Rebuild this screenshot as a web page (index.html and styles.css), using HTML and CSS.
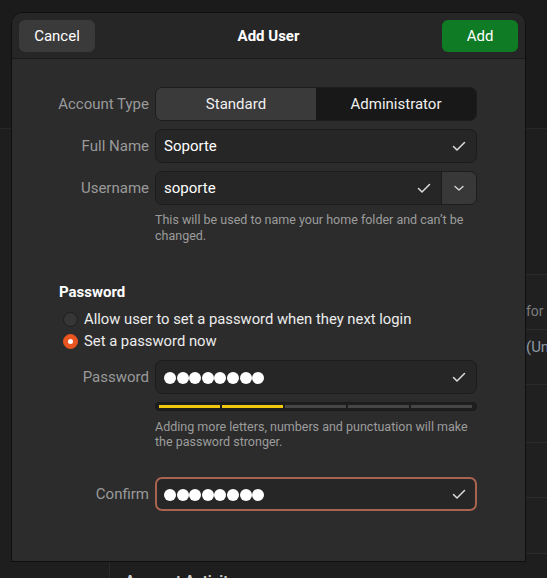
FILE: index.html
```html
<!DOCTYPE html>
<html lang="en">
<head>
<meta charset="utf-8">
<title>Add User</title>
<link rel="stylesheet" href="styles.css">
</head>
<body>
<div class="backdrop">
  <div class="bd-top"></div>
  <div class="bd-content">
    <div class="bd-side"></div>
    <div class="bd-main">
      <div class="bd-list">
        <div class="bd-row bd-row-a"><span class="bd-sub">for all</span></div>
        <div class="bd-row bd-row-b"><span class="bd-title">(Un</span></div>
        <div class="bd-row bd-row-c"></div>
        <div class="bd-row bd-row-d"></div>
        <div class="bd-row bd-row-e"></div>
      </div>
      <div class="bd-heading">Account Activity</div>
    </div>
  </div>
</div>

<div class="dialog">
  <div class="header">
    <button class="btn btn-cancel">Cancel</button>
    <div class="title">Add User</div>
    <button class="btn btn-add">Add</button>
  </div>

  <div class="content">
    <div class="form">
      <div class="label">Account Type</div>
      <div class="segmented">
        <div class="seg seg-on">Standard</div>
        <div class="seg seg-off">Administrator</div>
      </div>

      <div class="label">Full Name</div>
      <div class="entry">
        <span class="entry-text">Soporte</span>
        <svg class="check" viewBox="0 0 16 16" width="16" height="16"><path d="M2.5 8.5 L6 12 L13.5 4.5" fill="none" stroke="#dcdcdc" stroke-width="1.5" stroke-linecap="round" stroke-linejoin="round"/></svg>
      </div>

      <div class="label">Username</div>
      <div class="combo">
        <div class="combo-entry">
          <span class="entry-text">soporte</span>
          <svg class="check" viewBox="0 0 16 16" width="16" height="16"><path d="M2.5 8.5 L6 12 L13.5 4.5" fill="none" stroke="#dcdcdc" stroke-width="1.5" stroke-linecap="round" stroke-linejoin="round"/></svg>
        </div>
        <div class="combo-btn">
          <svg viewBox="0 0 16 16" width="16" height="16"><path d="M4 6.5 L8 10 L12 6.5" fill="none" stroke="#dcdcdc" stroke-width="1.3" stroke-linecap="round" stroke-linejoin="round"/></svg>
        </div>
      </div>

      <div class="helper helper-user">This will be used to name your home folder and can’t be changed.</div>
    </div>

    <div class="pw-title">Password</div>
    <div class="radios">
      <div class="radio-row"><span class="radio"></span><span class="radio-text">Allow user to set a password when they next login</span></div>
      <div class="radio-row"><span class="radio radio-on"></span><span class="radio-text">Set a password now</span></div>
    </div>

    <div class="form form-pw">
      <div class="label">Password</div>
      <div class="entry">
        <span class="dots"><i></i><i></i><i></i><i></i><i></i><i></i><i></i><i></i></span>
        <svg class="check" viewBox="0 0 16 16" width="16" height="16"><path d="M2.5 8.5 L6 12 L13.5 4.5" fill="none" stroke="#dcdcdc" stroke-width="1.5" stroke-linecap="round" stroke-linejoin="round"/></svg>
      </div>

      <div class="strength">
        <span class="bar bar-on"></span><span class="bar bar-on"></span><span class="bar"></span><span class="bar"></span><span class="bar"></span>
      </div>

      <div class="helper helper-pw">Adding more letters, numbers and punctuation will make the password stronger.</div>

      <div class="label label-confirm">Confirm</div>
      <div class="entry entry-focus">
        <span class="dots"><i></i><i></i><i></i><i></i><i></i><i></i><i></i><i></i></span>
        <svg class="check" viewBox="0 0 16 16" width="16" height="16"><path d="M2.5 8.5 L6 12 L13.5 4.5" fill="none" stroke="#dcdcdc" stroke-width="1.5" stroke-linecap="round" stroke-linejoin="round"/></svg>
      </div>
    </div>
  </div>
</div>
</body>
</html>
```

FILE: styles.css
```css
* { box-sizing: border-box; }

body {
  margin: 0;
  width: 547px;
  height: 578px;
  overflow: hidden;
  position: relative;
  background: #1c1c1c;
  font-family: Roboto, "Noto Sans", sans-serif;
  font-size: 15px;
}

/* ---------- backdrop window ---------- */
.backdrop {
  height: 578px;
  display: flex;
  flex-direction: column;
}
.bd-top {
  height: 129px;
  flex: none;
  background: #1b1b1b;
  border-bottom: 1px solid #272727;
}
.bd-content {
  flex: 1;
  display: flex;
}
.bd-side {
  width: 110px;
  flex: none;
  background: #1e1e1e;
  border-right: 1px solid #2a2a2a;
}
.bd-main {
  flex: 1;
  background: #1e1e1e;
  padding-top: 145px;
}
.bd-list {
  background: #202020;
}
.bd-row {
  border-top: 1px solid #2b2b2b;
  padding-left: 416px;
  white-space: nowrap;
  overflow: hidden;
  line-height: 16px;
}
.bd-row-a { height: 55px; padding-top: 28px; }
.bd-row-b { height: 55px; padding-top: 9px; }
.bd-row-c { height: 58px; }
.bd-row-d { height: 55px; }
.bd-row-e { height: 57px; border-bottom: 1px solid #2b2b2b; }
.bd-sub { color: #7d7d7d; font-size: 14px; }
.bd-title { color: #8f98a3; font-size: 15px; }
.bd-heading {
  margin: 17px 0 0 15px;
  color: #cfcfcf;
  font-weight: bold;
  font-size: 15px;
  line-height: 20px;
}

/* ---------- dialog ---------- */
.dialog {
  position: absolute;
  left: 11px;
  top: 12px;
  width: 515px;
  height: 550px;
  border: 1px solid #0f0f0f;
  border-radius: 12px 12px 0 0;
  background: #2c2c2c;
  overflow: hidden;
  display: flex;
  flex-direction: column;
}

.header {
  height: 46px;
  flex: none;
  background: #262626;
  border-bottom: 1px solid #1a1a1a;
  padding: 0 7px;
  display: grid;
  grid-template-columns: 1fr auto 1fr;
  align-items: center;
}
.title {
  color: #ffffff;
  font-weight: bold;
  font-size: 15px;
}
.btn {
  height: 32px;
  width: 76px;
  border: none;
  border-radius: 6px;
  color: #ffffff;
  font-family: inherit;
  font-size: 15px;
  padding: 0;
}
.btn-cancel { background: #3a3a3a; justify-self: start; }
.btn-add { background: #107b25; justify-self: end; }

.content {
  padding-top: 28px;
}

.form {
  display: grid;
  grid-template-columns: 137px 322px;
  column-gap: 6px;
  row-gap: 8px;
  align-items: center;
}
.label {
  text-align: right;
  color: #9a9a9a;
  font-size: 15px;
}

.segmented {
  height: 34px;
  display: grid;
  grid-template-columns: 1fr 1fr;
  border: 1px solid #1c1c1c;
  border-radius: 7px;
  overflow: hidden;
}
.seg {
  display: flex;
  align-items: center;
  justify-content: center;
  color: #f0f0f0;
}
.seg-on { background: #3a3a3a; }
.seg-off { background: #181818; }

.entry {
  height: 34px;
  display: flex;
  align-items: center;
  justify-content: space-between;
  background: #262626;
  border: 1px solid #1c1c1c;
  border-radius: 7px;
  padding: 0 9px 0 8px;
  color: #ffffff;
}
.entry-text { color: #ffffff; }
.check { flex: none; display: block; }

.combo {
  height: 34px;
  display: flex;
  border: 1px solid #1c1c1c;
  border-radius: 7px;
  overflow: hidden;
}
.combo-entry {
  flex: 1;
  display: flex;
  align-items: center;
  justify-content: space-between;
  background: #262626;
  padding: 0 9px 0 8px;
}
.combo-btn {
  width: 35px;
  flex: none;
  display: flex;
  align-items: center;
  justify-content: center;
  background: #383838;
  border-left: 1px solid #1c1c1c;
}

.helper {
  grid-column: 2;
  color: #9c9c9c;
  font-size: 12.5px;
  line-height: 15.5px;
}
.helper-user { margin-top: -1px; }

.pw-title {
  margin: 39px 0 0 47px;
  color: #ffffff;
  font-weight: bold;
  line-height: 20px;
}
.radios {
  margin: 6px 0 0 51px;
}
.radio-row {
  height: 22px;
  display: flex;
  align-items: center;
  gap: 6px;
  color: #ececec;
}
.radio-text { font-size: 14.8px; }
.radio {
  width: 15px;
  height: 15px;
  border-radius: 50%;
  background: #363636;
  border: 1px solid #1e1e1e;
  display: flex;
  align-items: center;
  justify-content: center;
  flex: none;
}
.radio-on {
  background: #e95420;
  border-color: #e95420;
}
.radio-on::after {
  content: "";
  width: 5px;
  height: 5px;
  border-radius: 50%;
  background: #ffffff;
}

.form-pw {
  margin-top: 8px;
  row-gap: 0;
}
.dots {
  display: flex;
  padding-top: 2px;
}
.dots i {
  width: 12.6px;
  height: 12px;
  display: block;
}
.dots i::before {
  content: "";
  display: block;
  width: 12px;
  height: 12px;
  border-radius: 50%;
  background: #ffffff;
}

.strength {
  grid-column: 2;
  margin-top: 8px;
  height: 9px;
  background: #1e1e1e;
  border: 1px solid #1a1a1a;
  border-radius: 4px;
  padding: 2px 4px 2px 3px;
  display: flex;
  gap: 2px;
}
.bar {
  flex: 1;
  height: 3px;
  background: #464646;
}
.bar-on { background: #f2c80f; }

.helper-pw { margin-top: 8px; line-height: 15px; }

.label-confirm { margin-top: 28px; }
.entry-focus {
  margin-top: 28px;
  border: 2px solid #a8644e;
  padding: 0 8px 0 7px;
}
```
